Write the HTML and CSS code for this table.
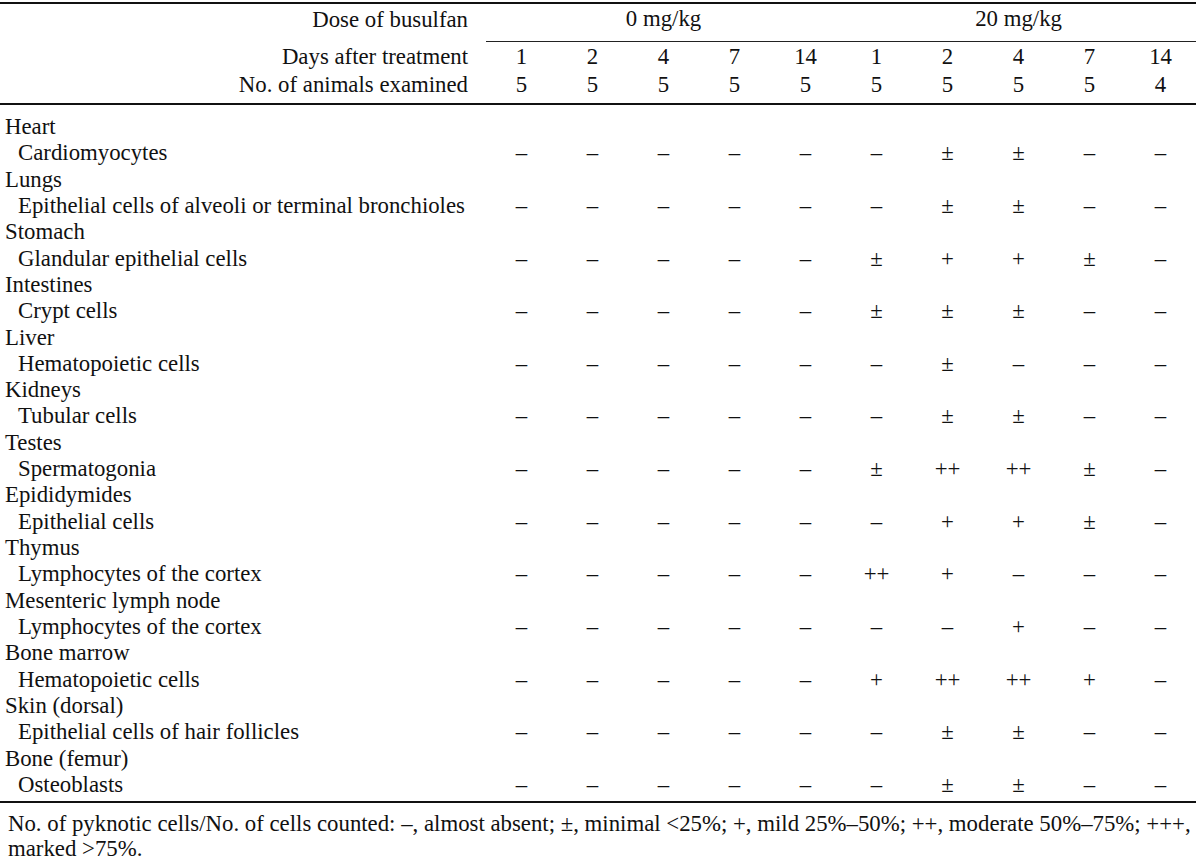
FILE: index.html
```html
<!DOCTYPE html>
<html lang="en">
<head>
<meta charset="utf-8">
<title>Pyknotic cells after busulfan treatment</title>
<link rel="stylesheet" href="styles.css">
</head>
<body>
<table class="tbl">
  <colgroup>
    <col class="c-label">
    <col class="c-val"><col class="c-val"><col class="c-val"><col class="c-val"><col class="c-val">
    <col class="c-val"><col class="c-val"><col class="c-val"><col class="c-val"><col class="c-val">
  </colgroup>
  <thead>
    <tr class="dose-row">
      <th class="hlabel">Dose of busulfan</th>
      <th class="grp" colspan="5">0 mg/kg</th>
      <th class="grp" colspan="5">20 mg/kg</th>
    </tr>
    <tr class="days-row">
      <th class="hlabel">Days after treatment</th>
      <th>1</th><th>2</th><th>4</th><th>7</th><th>14</th>
      <th>1</th><th>2</th><th>4</th><th>7</th><th>14</th>
    </tr>
    <tr class="n-row">
      <th class="hlabel">No. of animals examined</th>
      <th>5</th><th>5</th><th>5</th><th>5</th><th>5</th>
      <th>5</th><th>5</th><th>5</th><th>5</th><th>4</th>
    </tr>
  </thead>
  <tbody>
    <tr class="org first"><td class="olabel">Heart</td><td colspan="10"></td></tr>
    <tr class="cell"><td class="clabel">Cardiomyocytes</td><td>–</td><td>–</td><td>–</td><td>–</td><td>–</td><td>–</td><td>±</td><td>±</td><td>–</td><td>–</td></tr>
    <tr class="org"><td class="olabel">Lungs</td><td colspan="10"></td></tr>
    <tr class="cell"><td class="clabel">Epithelial cells of alveoli or terminal bronchioles</td><td>–</td><td>–</td><td>–</td><td>–</td><td>–</td><td>–</td><td>±</td><td>±</td><td>–</td><td>–</td></tr>
    <tr class="org"><td class="olabel">Stomach</td><td colspan="10"></td></tr>
    <tr class="cell"><td class="clabel">Glandular epithelial cells</td><td>–</td><td>–</td><td>–</td><td>–</td><td>–</td><td>±</td><td>+</td><td>+</td><td>±</td><td>–</td></tr>
    <tr class="org"><td class="olabel">Intestines</td><td colspan="10"></td></tr>
    <tr class="cell"><td class="clabel">Crypt cells</td><td>–</td><td>–</td><td>–</td><td>–</td><td>–</td><td>±</td><td>±</td><td>±</td><td>–</td><td>–</td></tr>
    <tr class="org"><td class="olabel">Liver</td><td colspan="10"></td></tr>
    <tr class="cell"><td class="clabel">Hematopoietic cells</td><td>–</td><td>–</td><td>–</td><td>–</td><td>–</td><td>–</td><td>±</td><td>–</td><td>–</td><td>–</td></tr>
    <tr class="org"><td class="olabel">Kidneys</td><td colspan="10"></td></tr>
    <tr class="cell"><td class="clabel">Tubular cells</td><td>–</td><td>–</td><td>–</td><td>–</td><td>–</td><td>–</td><td>±</td><td>±</td><td>–</td><td>–</td></tr>
    <tr class="org"><td class="olabel">Testes</td><td colspan="10"></td></tr>
    <tr class="cell"><td class="clabel">Spermatogonia</td><td>–</td><td>–</td><td>–</td><td>–</td><td>–</td><td>±</td><td>++</td><td>++</td><td>±</td><td>–</td></tr>
    <tr class="org"><td class="olabel">Epididymides</td><td colspan="10"></td></tr>
    <tr class="cell"><td class="clabel">Epithelial cells</td><td>–</td><td>–</td><td>–</td><td>–</td><td>–</td><td>–</td><td>+</td><td>+</td><td>±</td><td>–</td></tr>
    <tr class="org"><td class="olabel">Thymus</td><td colspan="10"></td></tr>
    <tr class="cell"><td class="clabel">Lymphocytes of the cortex</td><td>–</td><td>–</td><td>–</td><td>–</td><td>–</td><td>++</td><td>+</td><td>–</td><td>–</td><td>–</td></tr>
    <tr class="org"><td class="olabel">Mesenteric lymph node</td><td colspan="10"></td></tr>
    <tr class="cell"><td class="clabel">Lymphocytes of the cortex</td><td>–</td><td>–</td><td>–</td><td>–</td><td>–</td><td>–</td><td>–</td><td>+</td><td>–</td><td>–</td></tr>
    <tr class="org"><td class="olabel">Bone marrow</td><td colspan="10"></td></tr>
    <tr class="cell"><td class="clabel">Hematopoietic cells</td><td>–</td><td>–</td><td>–</td><td>–</td><td>–</td><td>+</td><td>++</td><td>++</td><td>+</td><td>–</td></tr>
    <tr class="org"><td class="olabel">Skin (dorsal)</td><td colspan="10"></td></tr>
    <tr class="cell"><td class="clabel">Epithelial cells of hair follicles</td><td>–</td><td>–</td><td>–</td><td>–</td><td>–</td><td>–</td><td>±</td><td>±</td><td>–</td><td>–</td></tr>
    <tr class="org"><td class="olabel">Bone (femur)</td><td colspan="10"></td></tr>
    <tr class="cell last"><td class="clabel">Osteoblasts</td><td>–</td><td>–</td><td>–</td><td>–</td><td>–</td><td>–</td><td>±</td><td>±</td><td>–</td><td>–</td></tr>
  </tbody>
</table>
<p class="note">No. of pyknotic cells/No. of cells counted: –, almost absent; ±, minimal &lt;25%; +, mild 25%–50%; ++, moderate 50%–75%; +++, marked &gt;75%.</p>
</body>
</html>
```

FILE: styles.css
```css
html, body {
  margin: 0;
  padding: 0;
  background: #ffffff;
}

body {
  color: #111111;
  font-family: "Liberation Serif", "Times New Roman", serif;
  font-size: 22.8px;
}

.tbl {
  width: 1196px;
  table-layout: fixed;
  border-collapse: separate;
  border-spacing: 0;
  margin-top: 2px;
  border-top: 2px solid #111111;
  border-bottom: 2px solid #111111;
}

.c-label { width: 486px; }
.c-val { width: 71px; }

.tbl th,
.tbl td {
  padding: 0;
  font-weight: normal;
  text-align: center;
  white-space: nowrap;
}

.tbl th.hlabel {
  text-align: right;
  padding-right: 18px;
}

.dose-row th {
  line-height: 27px;
  padding-top: 1px;
  padding-bottom: 9px;
}

.dose-row th.grp {
  border-bottom: 1px solid #222222;
}

.days-row th {
  line-height: 27px;
  padding-top: 1px;
}

.n-row th {
  line-height: 27px;
  padding-top: 1px;
  padding-bottom: 5px;
  border-bottom: 2px solid #111111;
}

.tbl tbody td {
  line-height: 26.32px;
}

.tbl td.olabel {
  text-align: left;
  padding-left: 5px;
}

.tbl td.clabel {
  text-align: left;
  padding-left: 18px;
}

.org.first td {
  padding-top: 9px;
}

.cell.last td {
  padding-bottom: 3px;
}

.note {
  margin: 8px 0 0 0;
  padding-left: 8px;
  width: 1188px;
  line-height: 25px;
}
```
